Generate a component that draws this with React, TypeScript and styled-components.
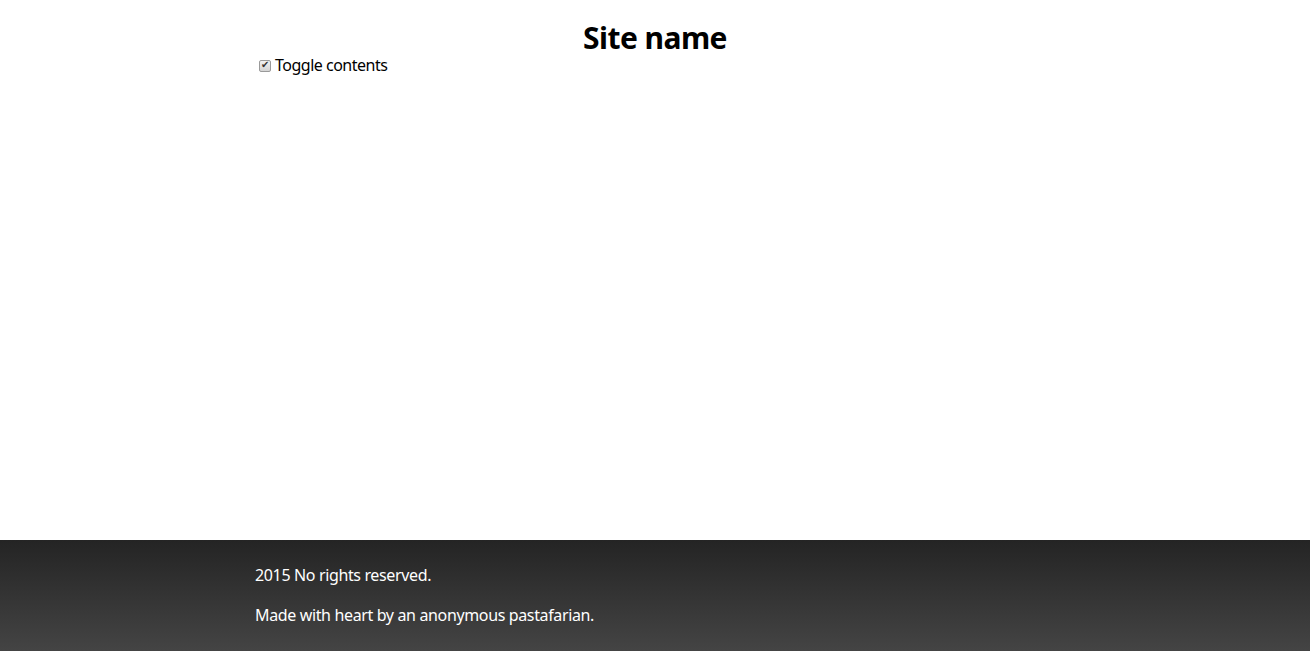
import React, { useState } from 'react';
import styled, { createGlobalStyle } from 'styled-components';

const GlobalStyle = createGlobalStyle`
    html, body {
        margin: 0;
        padding: 0;
    }

    body {
        font-family: "Noto Sans", "Open Sans", sans-serif;
        font-size: 16px;
        color: #000;
        background: #fff;
    }
`;

const Page = styled.div`
    min-height: 100vh;
    display: flex;
    flex-direction: column;
`;

const Main = styled.main`
    flex: 1;
    width: 100%;
    max-width: 800px;
    margin: 0 auto;
`;

const Title = styled.h1`
    margin: 21px 0 0;
    font-size: 30px;
    line-height: 33px;
    font-weight: 700;
    letter-spacing: -0.55px;
    text-align: center;
`;

const Toggle = styled.label`
    display: flex;
    align-items: center;
    line-height: 22px;
    letter-spacing: -0.5px;
    cursor: pointer;
`;

const Check = styled.input`
    appearance: none;
    position: relative;
    width: 12px;
    height: 12px;
    margin: 3px 4px 1px 4px;
    border: 1px solid #9a9a9a;
    border-radius: 2px;
    background: linear-gradient(#f2f2f2, #d4d4d4);
    box-sizing: border-box;

    &:checked::after {
        content: '✔';
        position: absolute;
        left: 1px;
        top: -3px;
        font-size: 10px;
        line-height: 14px;
        color: #333;
    }
`;

const Contents = styled.section`
    padding: 8px 0;
`;

const Footer = styled.footer`
    padding: 7px 0 8px;
    color: #fff;
    background: linear-gradient(#242424, #444444);
`;

const FooterInner = styled.div`
    max-width: 800px;
    margin: 0 auto;

    p {
        margin: 16px 0;
        line-height: 24px;
        letter-spacing: -0.36px;
    }
`;

export default function App() {
    const [open, setOpen] = useState(true);

    return (
        <Page>
            <GlobalStyle />
            <Main>
                <Title>Site name</Title>
                <Toggle>
                    <Check type="checkbox" checked={open} onChange={() => setOpen(!open)} />
                    Toggle contents
                </Toggle>
                {!open && <Contents />}
            </Main>
            <Footer>
                <FooterInner>
                    <p>2015 No rights reserved.</p>
                    <p>Made with heart by an anonymous pastafarian.</p>
                </FooterInner>
            </Footer>
        </Page>
    );
}
